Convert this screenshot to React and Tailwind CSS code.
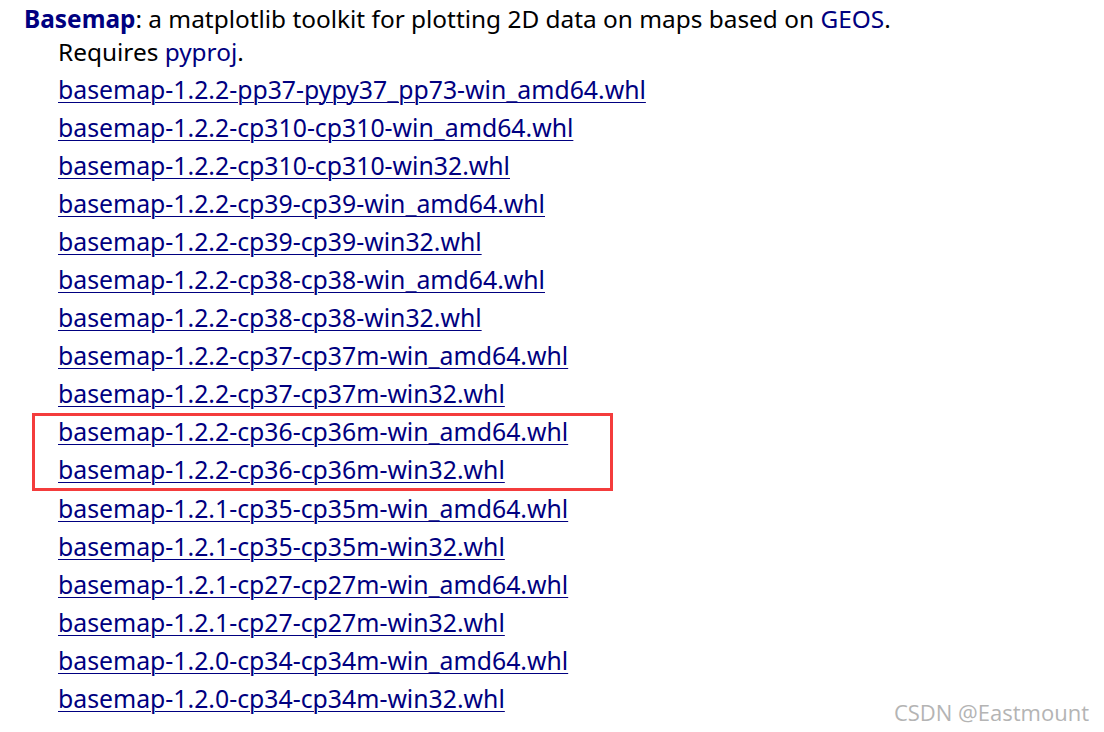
import React from "react";

const before = [
  "basemap-1.2.2-pp37-pypy37_pp73-win_amd64.whl",
  "basemap-1.2.2-cp310-cp310-win_amd64.whl",
  "basemap-1.2.2-cp310-cp310-win32.whl",
  "basemap-1.2.2-cp39-cp39-win_amd64.whl",
  "basemap-1.2.2-cp39-cp39-win32.whl",
  "basemap-1.2.2-cp38-cp38-win_amd64.whl",
  "basemap-1.2.2-cp38-cp38-win32.whl",
  "basemap-1.2.2-cp37-cp37m-win_amd64.whl",
  "basemap-1.2.2-cp37-cp37m-win32.whl",
];
const boxed = [
  "basemap-1.2.2-cp36-cp36m-win_amd64.whl",
  "basemap-1.2.2-cp36-cp36m-win32.whl",
];
const after = [
  "basemap-1.2.1-cp35-cp35m-win_amd64.whl",
  "basemap-1.2.1-cp35-cp35m-win32.whl",
  "basemap-1.2.1-cp27-cp27m-win_amd64.whl",
  "basemap-1.2.1-cp27-cp27m-win32.whl",
  "basemap-1.2.0-cp34-cp34m-win_amd64.whl",
  "basemap-1.2.0-cp34-cp34m-win32.whl",
];

function Row({ name }) {
  return (
    <div className="h-[38px] flex items-center">
      <a href="#" className="text-[#000080] underline decoration-1 underline-offset-[3px]">
        {name}
      </a>
    </div>
  );
}

export default function App() {
  return (
    <div
      className="relative w-[1104px] h-[732px] bg-white overflow-hidden text-black text-[24.8px]"
      style={{ fontFamily: '"Noto Sans", "Open Sans", sans-serif' }}
    >
      <div className="pl-[24px] pt-[2px]">
        <div className="leading-[34px] text-[24.4px]">
          <a href="#" className="font-bold text-[#000080]">Basemap</a>: a matplotlib toolkit for plotting 2D data on maps based on{" "}
          <a href="#" className="text-[#000080]">GEOS</a>.
        </div>
        <div className="pl-[34px] leading-[32px] text-[24.4px]">
          Requires <a href="#" className="text-[#000080]">pyproj</a>.
        </div>
        <div className="pl-[34px] pt-[3px]">
          {before.map((n) => (
            <Row key={n} name={n} />
          ))}
        </div>
        <div className="ml-[8px] w-[581px] h-[78px] border-[3px] border-[#f43c3c] pl-[23px] -mb-[2px]">
          <div className="-mt-[3px]">
            {boxed.map((n) => (
              <Row key={n} name={n} />
            ))}
          </div>
        </div>
        <div className="pl-[34px] pt-[1px]">
          {after.map((n) => (
            <Row key={n} name={n} />
          ))}
        </div>
      </div>
      <div
        className="absolute right-[15px] bottom-[5px] text-[22px] text-[#b4b4b4] leading-[30px]"
        style={{ fontFamily: '"Open Sans", sans-serif' }}
      >
        CSDN @Eastmount
      </div>
    </div>
  );
}
